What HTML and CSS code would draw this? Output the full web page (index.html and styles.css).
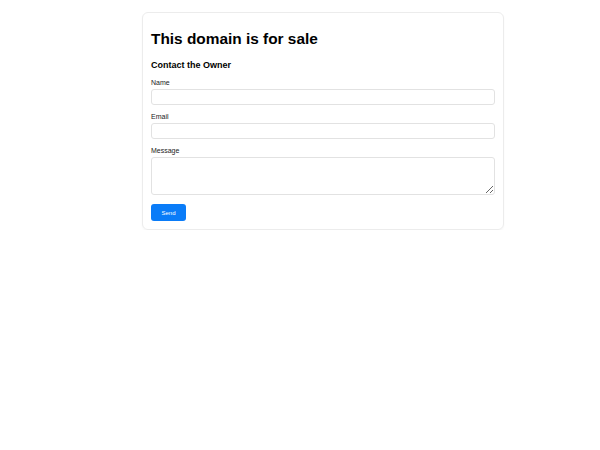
FILE: index.html
```html
<!DOCTYPE html>
<html>
<head>
<meta charset="utf-8">
<link rel="stylesheet" href="styles.css">
</head>
<body>
<div class="card">
  <h1 class="title">This domain is for sale</h1>
  <h2 class="subtitle">Contact the Owner</h2>
  <form class="form">
    <label class="field">
      <span class="label">Name</span>
      <input class="input" type="text">
    </label>
    <label class="field">
      <span class="label">Email</span>
      <input class="input" type="email">
    </label>
    <label class="field">
      <span class="label">Message</span>
      <textarea class="input area"></textarea>
    </label>
    <div class="actions"><button class="btn" type="button">Send</button></div>
  </form>
</div>
</body>
</html>
```
FILE: styles.css
```css
html, body { margin: 0; padding: 0; background: #fff; }
body { font-family: "Liberation Sans", Arial, sans-serif; color: #111; }
.card {
  margin: 12px 0 0 142px;
  width: 362px;
  box-sizing: border-box;
  border: 1px solid #ececec;
  border-radius: 6px;
  padding: 16px 8px 8px 8px;
  box-shadow: 0 1px 2px rgba(0,0,0,0.04);
}
.title { margin: 0; font-size: 15.4px; line-height: 20px; font-weight: bold; color: #000; }
.subtitle { margin: 10px 0 0 0; font-size: 9px; line-height: 12px; font-weight: bold; color: #000; }
.form { display: flex; flex-direction: column; margin-top: 7px; }
.field { display: flex; flex-direction: column; margin-bottom: 7px; }
.label { font-size: 7px; line-height: 9px; margin-bottom: 2px; color: #222; }
.input {
  display: block;
  box-sizing: border-box;
  width: 100%;
  height: 16px;
  border: 1px solid #e2e2e2;
  border-radius: 3px;
  padding: 2px 4px;
  font-size: 7px;
  font-family: inherit;
  margin: 0;
}
.area { height: 38px; resize: vertical; }
.actions { display: flex; margin-top: 2px; }
.btn {
  width: 35px; height: 17px;
  background: #0a7cf8;
  color: #fff;
  border: none;
  border-radius: 3px;
  font-size: 6px;
  font-weight: normal;
  font-family: inherit;
  padding: 0;
}
```
